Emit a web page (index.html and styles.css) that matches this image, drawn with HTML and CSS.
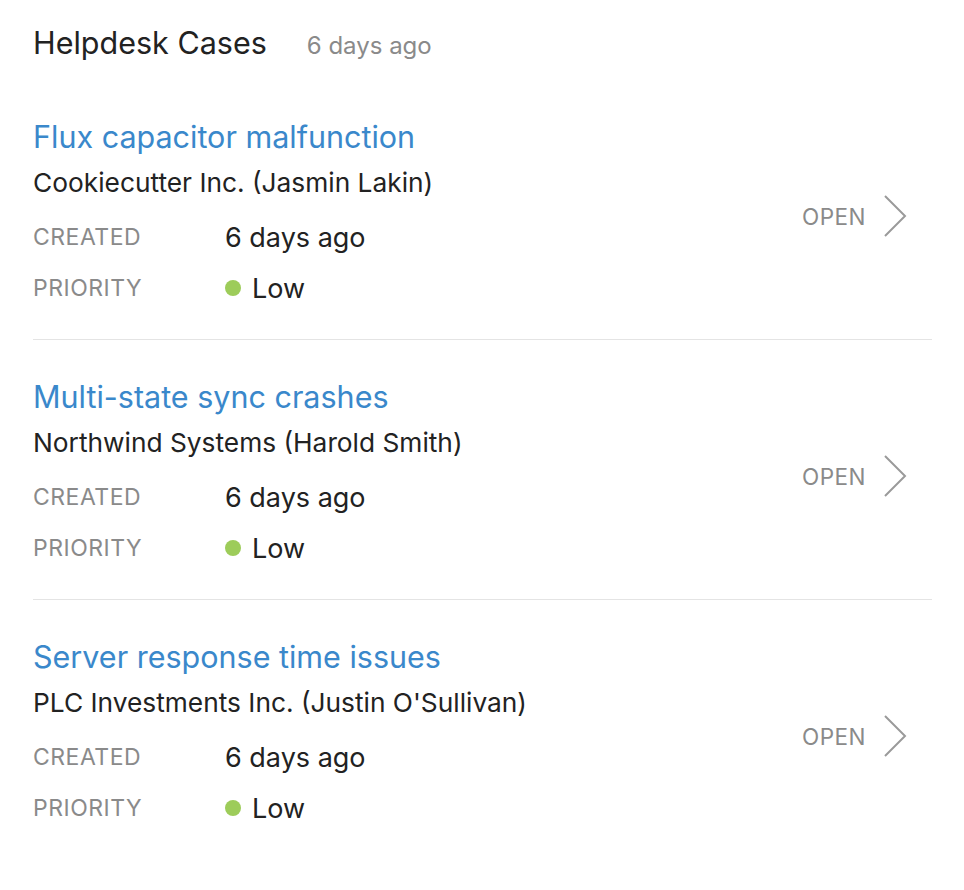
FILE: index.html
```html
<!DOCTYPE html>
<html lang="en">
<head>
  <meta charset="UTF-8">
  <meta name="viewport" content="width=device-width, initial-scale=1.0">
  <title>Helpdesk Cases</title>
  <link rel="stylesheet" href="styles.css">
</head>
<body>

<section class="panel" aria-label="Helpdesk Cases">
  <header class="panel-header">
    <h1>Helpdesk Cases</h1>
    <span class="updated">6 days ago</span>
  </header>

  <ul class="cases">
    <li class="case">
      <div class="case-info">
        <a class="case-title" href="#">Flux capacitor malfunction</a>
        <div class="case-customer">Cookiecutter Inc. (Jasmin Lakin)</div>
        <dl class="case-meta">
          <dt>Created</dt>
          <dd>6 days ago</dd>
          <dt>Priority</dt>
          <dd><span class="dot low"></span>Low</dd>
        </dl>
      </div>
      <a class="case-status" href="#">
        Open
        <svg width="24" height="42" viewBox="0 0 24 42" aria-hidden="true"><path d="M2 1 L22 21 L2 41" /></svg>
      </a>
    </li>
    <li class="case">
      <div class="case-info">
        <a class="case-title" href="#">Multi-state sync crashes</a>
        <div class="case-customer">Northwind Systems (Harold Smith)</div>
        <dl class="case-meta">
          <dt>Created</dt>
          <dd>6 days ago</dd>
          <dt>Priority</dt>
          <dd><span class="dot low"></span>Low</dd>
        </dl>
      </div>
      <a class="case-status" href="#">
        Open
        <svg width="24" height="42" viewBox="0 0 24 42" aria-hidden="true"><path d="M2 1 L22 21 L2 41" /></svg>
      </a>
    </li>
    <li class="case">
      <div class="case-info">
        <a class="case-title" href="#">Server response time issues</a>
        <div class="case-customer">PLC Investments Inc. (Justin O'Sullivan)</div>
        <dl class="case-meta">
          <dt>Created</dt>
          <dd>6 days ago</dd>
          <dt>Priority</dt>
          <dd><span class="dot low"></span>Low</dd>
        </dl>
      </div>
      <a class="case-status" href="#">
        Open
        <svg width="24" height="42" viewBox="0 0 24 42" aria-hidden="true"><path d="M2 1 L22 21 L2 41" /></svg>
      </a>
    </li>
  </ul>
</section>

</body>
</html>
```

FILE: styles.css
```css
body {
  font-family: Inter, "Noto Sans", sans-serif;
  background-color: #fff;
  color: #222;
  margin: 0;
  padding: 0 32px 0 33px;
}
.panel-header {
  display: flex;
  align-items: baseline;
  gap: 40px;
  padding-top: 25px;
}
h1 {
  font-size: 30.5px;
  line-height: 36px;
  font-weight: 400;
  margin: 0;
  color: #222;
}
.updated {
  font-size: 24px;
  color: #8a8a8a;
}
.cases {
  list-style: none;
  margin: 19px 0 0;
  padding: 0;
}
.case {
  display: flex;
  align-items: center;
  justify-content: space-between;
  padding: 39px 0 35px;
  border-bottom: 1px solid #e4e4e4;
}
.case:last-child {
  border-bottom: none;
}
.case-title {
  display: block;
  font-size: 30.5px;
  line-height: 36px;
  color: #3a88cb;
  text-decoration: none;
}
.case-customer {
  font-size: 26.3px;
  line-height: 32px;
  margin-top: 12px;
}
.case-meta {
  display: grid;
  grid-template-columns: 192px auto;
  grid-auto-rows: 32px;
  row-gap: 19px;
  align-items: center;
  margin: 22px 0 0;
}
.case-meta dt {
  font-size: 23px;
  text-transform: uppercase;
  color: #8a8a8a;
  letter-spacing: 0.5px;
}
.case-meta dd {
  margin: 0;
  font-size: 27px;
  display: flex;
  align-items: center;
}
.dot {
  width: 16px;
  height: 16px;
  border-radius: 50%;
  margin-right: 11px;
}
.dot.low {
  background-color: #9dcc5a;
}
.case-status {
  display: flex;
  align-items: center;
  gap: 17px;
  margin: 9px 25px 0 0;
  font-size: 22.5px;
  text-transform: uppercase;
  color: #8a8a8a;
  text-decoration: none;
  letter-spacing: 0.5px;
}
.case-status svg {
  fill: none;
  stroke: #9a9a9a;
  stroke-width: 2;
}
```
